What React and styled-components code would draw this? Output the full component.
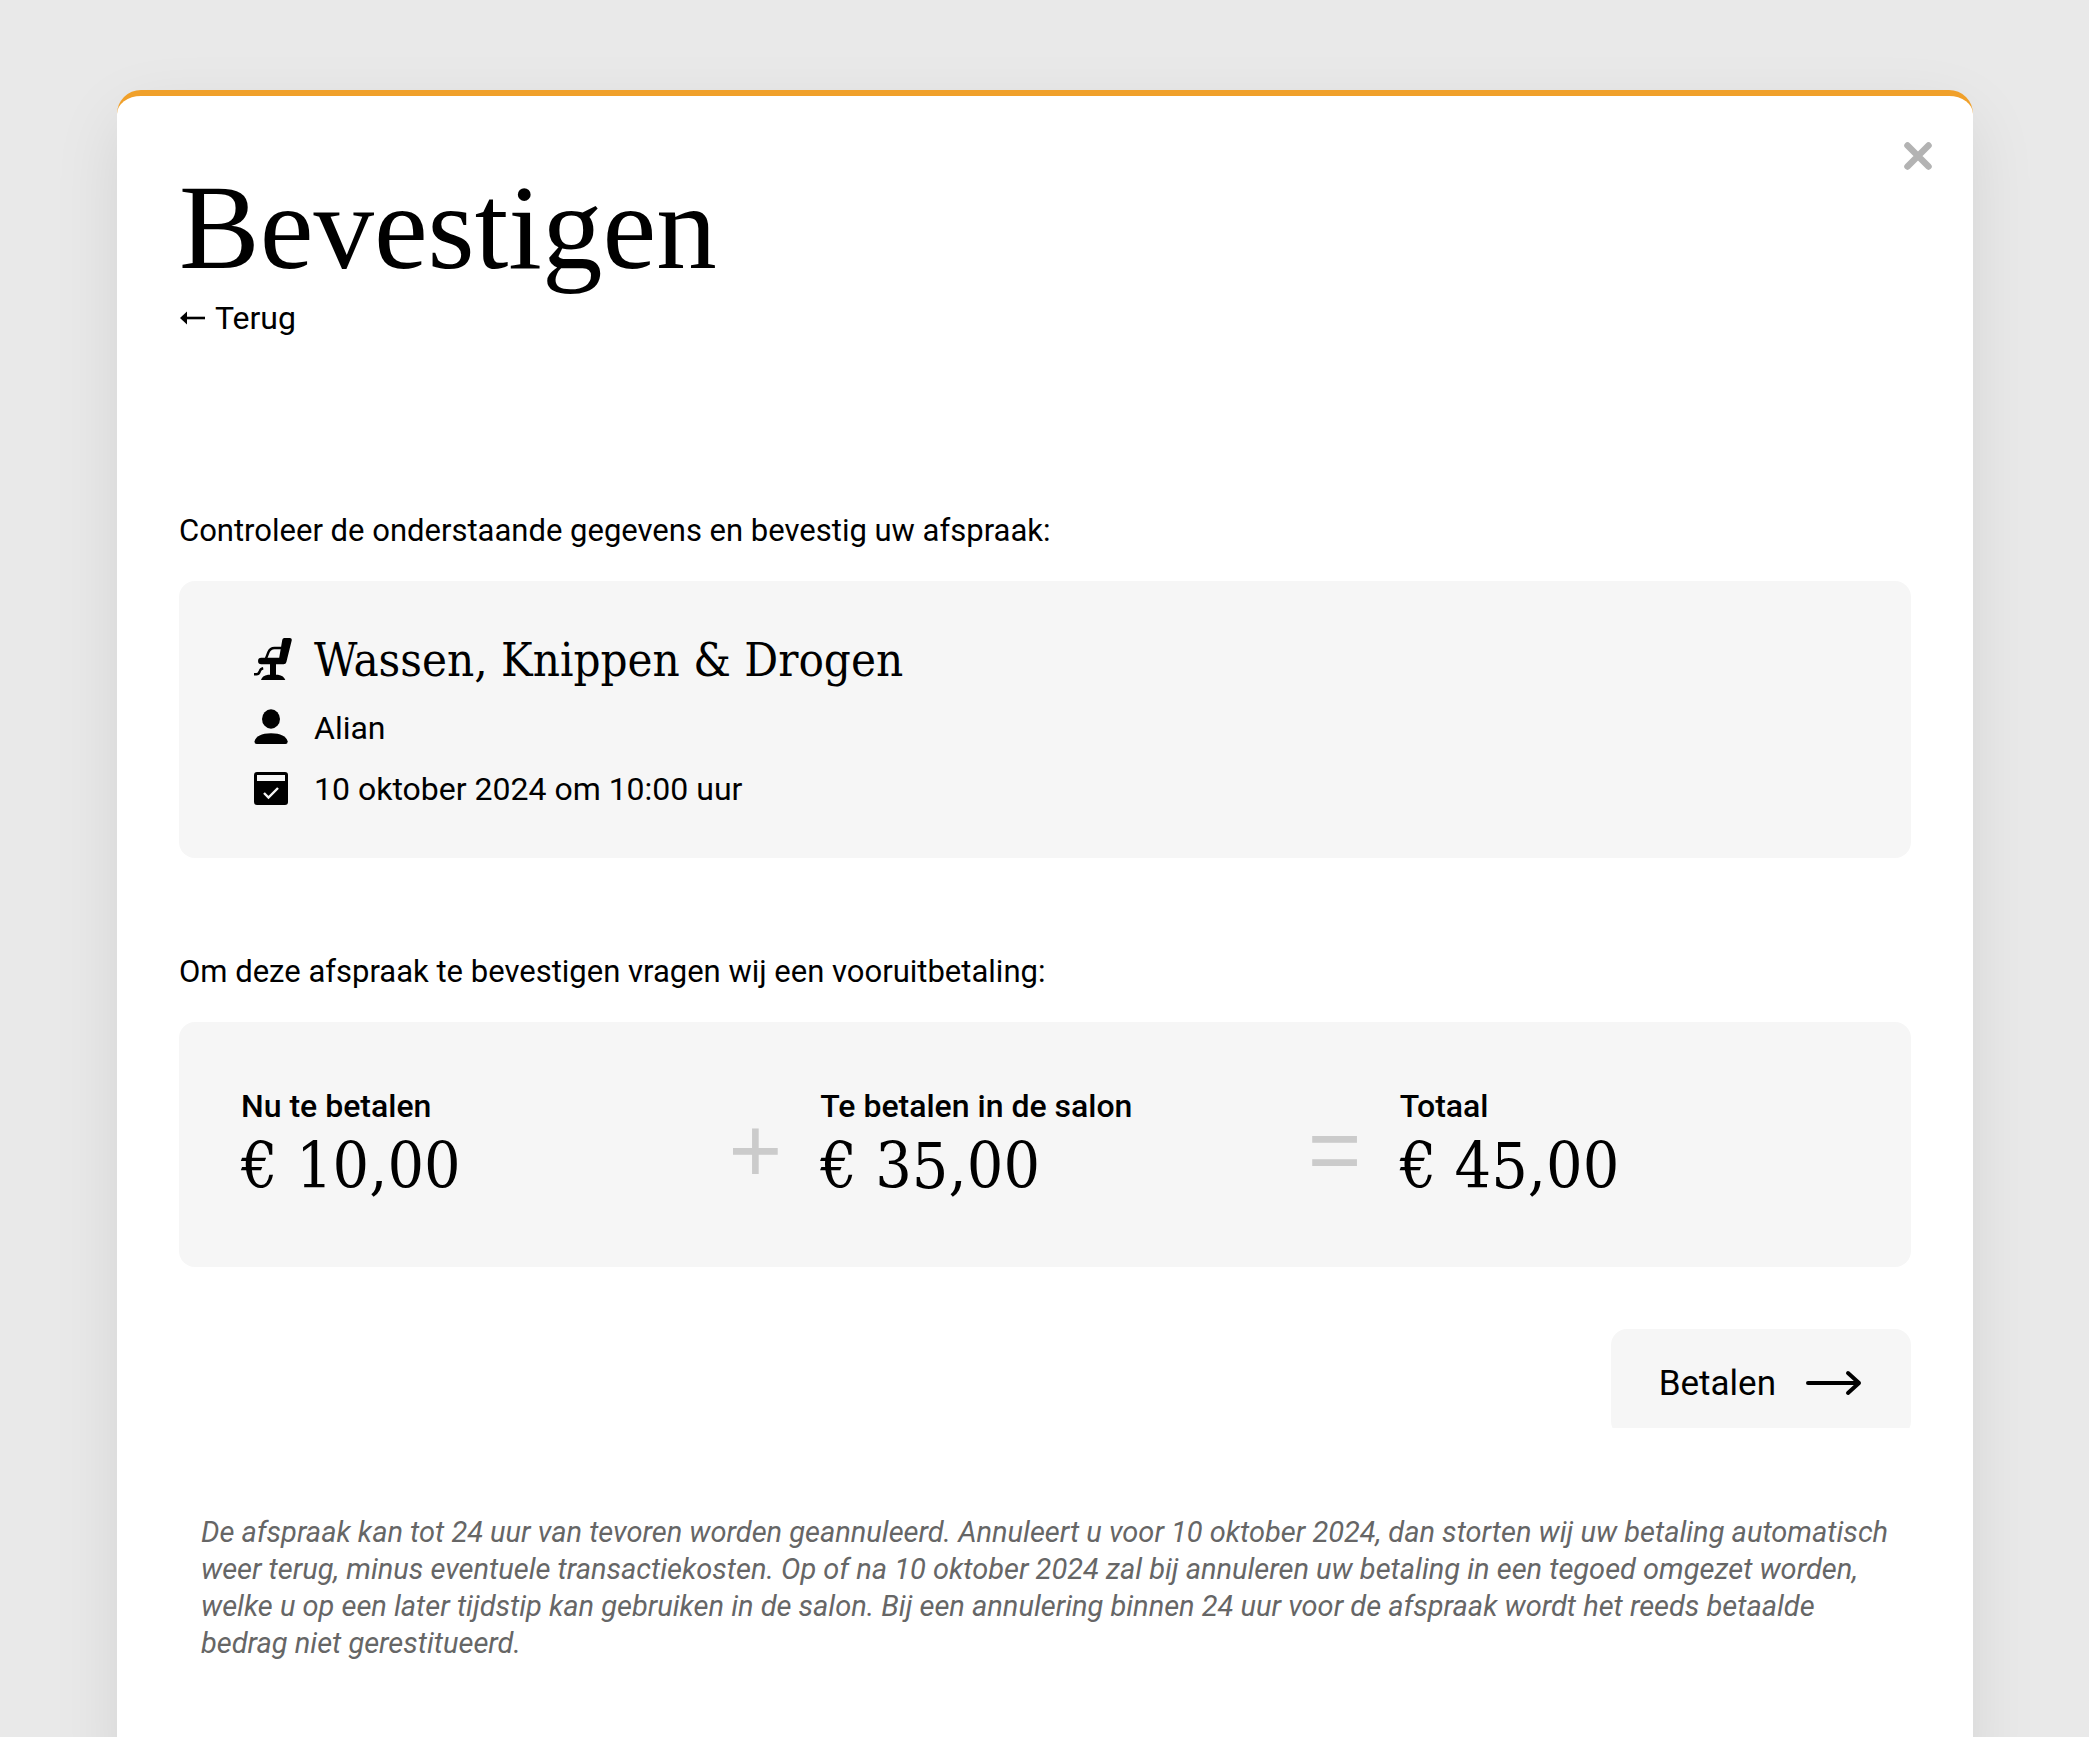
import React from 'react';
import styled, { createGlobalStyle } from 'styled-components';

const GlobalStyle = createGlobalStyle`
  * {
    box-sizing: border-box;
  }
  body {
    margin: 0;
    background: #e9e9e9;
    color: #000;
    font-family: Roboto, 'Liberation Sans', sans-serif;
    font-size: 32px;
    line-height: 40px;
  }
`

const prices = [
    { label: 'Nu te betalen', amount: '€ 10,00' },
    { label: 'Te betalen in de salon', amount: '€ 35,00', operator: '+' },
    { label: 'Totaal', amount: '€ 45,00', operator: '=' },
]

const ChairIcon = () => (
    <Icon viewBox="0 0 40 44">
        <path d="M31.5 0h5.2a2 2 0 0 1 2 2.4L33.4 24a3 3 0 0 1-3 2.2H8.3a3.2 3.2 0 0 1 0-6.5H26.2L29.3 1.8A2.2 2.2 0 0 1 31.5 0z" />
        <path d="M13 20.5l2.4-6.2q1.8-4.3 6-4.3H28" fill="none" stroke="#000" strokeWidth="2.4" />
        <path d="M17 25h6v12h-6z" />
        <path d="M8 42q1-4.2 7-5.3h10q6 1.1 7.3 5.3z" />
        <path d="M1 36.2h2.5q2.3 0 3.2-2.7.8-2.7 3.5-3.2" fill="none" stroke="#000" strokeWidth="2.4" />
    </Icon>
)

const PersonIcon = () => (
    <Icon viewBox="0 0 40 44">
        <ellipse cx="18" cy="13" rx="9" ry="9.7" />
        <path d="M1.5 35.5Q3.5 27.5 18 27.3 32.5 27.5 34.7 35.5 34.7 38 32.5 38H3.7Q1.5 38 1.5 35.5z" />
    </Icon>
)

const CalendarIcon = () => (
    <Icon viewBox="0 0 40 44">
        <rect x="1" y="5" width="34" height="33" rx="3" />
        <path d="M4 8h28v6H4z" fill="#f6f6f6" />
        <path d="M11 26l4.5 4.5L25 21" fill="none" stroke="#f6f6f6" strokeWidth="2.4" />
    </Icon>
)

export default function App() {
    return (
        <StyledPage>
            <GlobalStyle />
            <StyledModal role="dialog" aria-labelledby="title">
                <StyledClose type="button" aria-label="Sluiten">
                    <svg width="28" height="28" viewBox="0 0 28 28">
                        <path d="M3.5 3.5l21 21m0-21l-21 21" stroke="#b3b3b3" strokeWidth="6.5" strokeLinecap="round" />
                    </svg>
                </StyledClose>
                <StyledTitle id="title">Bevestigen</StyledTitle>
                <StyledBack href="#terug">
                    <svg width="26" height="18" viewBox="0 0 26 18">
                        <path d="M1 9L8 2.5v13z" />
                        <path d="M7 9h19" stroke="#000" strokeWidth="2.6" />
                    </svg>
                    Terug
                </StyledBack>

                <StyledSection>
                    <p>Controleer de onderstaande gegevens en bevestig uw afspraak:</p>
                    <StyledDetails>
                        <StyledService><ChairIcon />Wassen, Knippen &amp; Drogen</StyledService>
                        <StyledDetail><PersonIcon />Alian</StyledDetail>
                        <StyledDetail><CalendarIcon />10 oktober 2024 om 10:00 uur</StyledDetail>
                    </StyledDetails>
                </StyledSection>

                <StyledSection>
                    <p>Om deze afspraak te bevestigen vragen wij een vooruitbetaling:</p>
                    <StyledPrices>
                        {prices.map(price => (
                            <React.Fragment key={price.label}>
                                {price.operator && <StyledOperator>{price.operator}</StyledOperator>}
                                <div>
                                    <StyledLabel>{price.label}</StyledLabel>
                                    <StyledAmount>{price.amount}</StyledAmount>
                                </div>
                            </React.Fragment>
                        ))}
                    </StyledPrices>
                </StyledSection>

                <StyledActions>
                    <StyledButton type="button">
                        Betalen
                        <svg width="56" height="26" viewBox="0 0 56 26">
                            <path d="M2 13h51M42 3l11 10-11 10" fill="none" stroke="#000" strokeWidth="4" strokeLinecap="round" strokeLinejoin="round" />
                        </svg>
                    </StyledButton>
                </StyledActions>

                <StyledNote>
                    De afspraak kan tot 24 uur van tevoren worden geannuleerd. Annuleert u voor 10 oktober 2024,
                    dan storten wij uw betaling automatisch weer terug, minus eventuele transactiekosten. Op of na
                    10 oktober 2024 zal bij annuleren uw betaling in een tegoed omgezet worden, welke u op een later
                    tijdstip kan gebruiken in de salon. Bij een annulering binnen 24 uur voor de afspraak wordt het
                    reeds betaalde bedrag niet gerestitueerd.
                </StyledNote>
            </StyledModal>
        </StyledPage>
    )
}

const StyledPage=styled.div`
  height: 100vh;
  padding: 90px 116px 0 117px;
  overflow: hidden;
`
const StyledModal=styled.main`
  position: relative;
  padding: 67px 62px 120px;
  background: #fff;
  border-top: 6px solid #f0a02a;
  border-radius: 24px;
  box-shadow: 0 24px 70px -4px rgba(0, 0, 0, 0.1);
`
const StyledClose=styled.button`
  position: absolute;
  top: 38px;
  right: 33px;
  display: flex;
  padding: 8px;
  border: 0;
  background: none;
  cursor: pointer;
`
const StyledTitle=styled.h1`
  margin: 0;
  font-family: 'Liberation Serif', serif;
  font-size: 121px;
  font-weight: 400;
  line-height: 128px;
`
const StyledBack=styled.a`
  display: flex;
  align-items: center;
  gap: 10px;
  margin-top: 7px;
  color: #000;
  text-decoration: none;
`
const StyledSection=styled.section`
  margin-top: 94px;
  p {
    margin: 0 0 30px;
    font-size: 31px;
  }
  ${StyledBack} + & {
    margin-top: 173px;
  }
`
const StyledPanel=styled.div`
  background: #f6f6f6;
  border-radius: 16px;
`
const StyledDetails=styled(StyledPanel)`
  display: flex;
  flex-direction: column;
  padding: 42px 74px 39px;
`
const StyledDetail=styled.div`
  display: flex;
  align-items: center;
  gap: 21px;
  height: 61px;
`
const StyledService=styled(StyledDetail)`
  height: 74px;
  font-family: 'DejaVu Serif Condensed', 'DejaVu Serif', serif;
  font-size: 47px;
`
const Icon=styled.svg`
  width: 40px;
  height: 44px;
`
const StyledPrices=styled(StyledPanel)`
  display: grid;
  grid-template-columns: 1fr 130px 1fr 130px 1fr;
  padding: 64px 62px 61px;
`
const StyledLabel=styled.div`
  font-weight: 500;
`
const StyledAmount=styled.div`
  font-family: 'DejaVu Serif Condensed', 'DejaVu Serif', serif;
  font-size: 64px;
  line-height: 80px;
  white-space: nowrap;
`
const StyledOperator=styled.div`
  height: 120px;
  color: #cbcbcb;
  font-family: 'Liberation Sans', sans-serif;
  font-size: 92px;
  line-height: 128px;
  text-align: center;
`
const StyledActions=styled.div`
  display: flex;
  justify-content: flex-end;
  height: 99px;
  margin-top: 62px;
  overflow: hidden;
`
const StyledButton=styled.button`
  display: flex;
  align-items: center;
  gap: 30px;
  height: 108px;
  padding: 0 49px 0 48px;
  border: 0;
  border-radius: 16px;
  background: #f6f6f6;
  color: #000;
  font-family: inherit;
  font-size: 35px;
  cursor: pointer;
`
const StyledNote=styled.p`
  margin: 86px 22px 0;
  color: #666;
  font-size: 29px;
  font-style: italic;
  line-height: 37px;
`
